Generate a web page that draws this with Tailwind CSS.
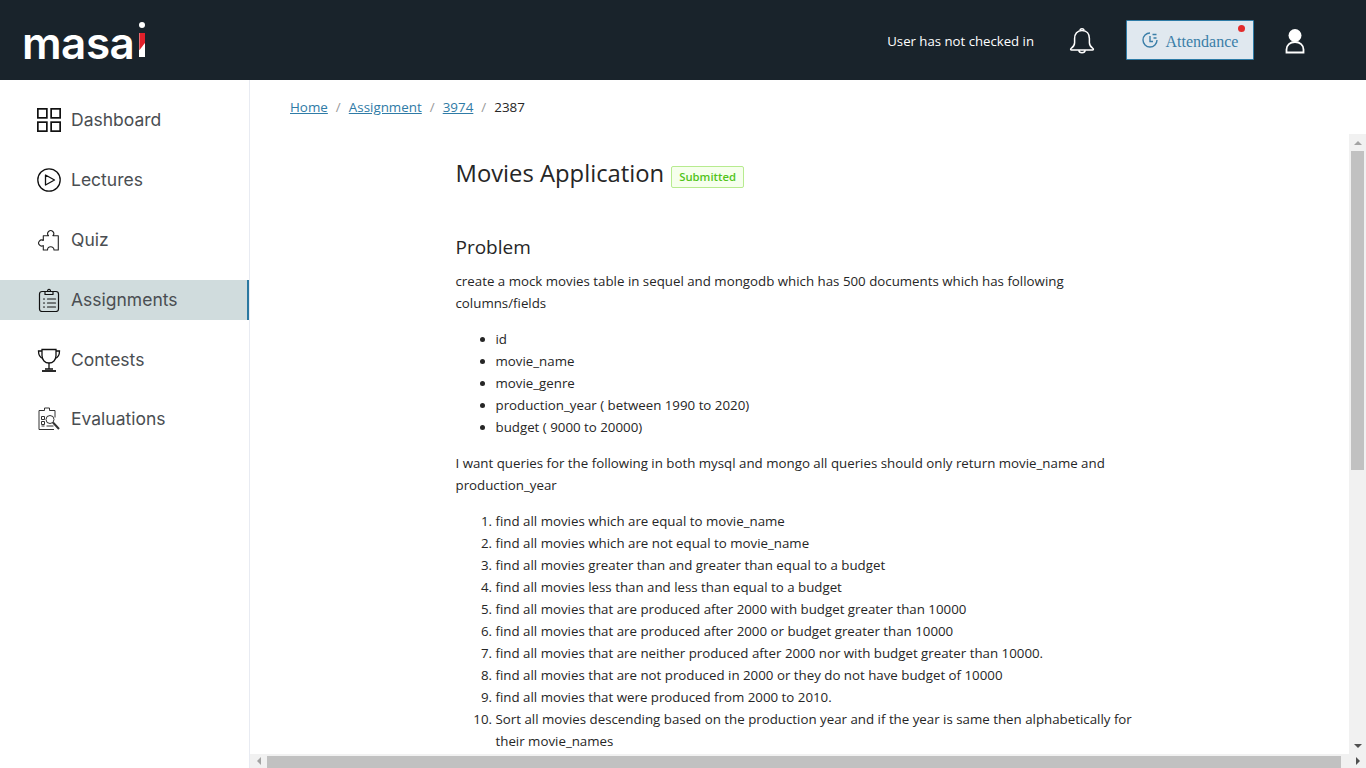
<!DOCTYPE html>
<html lang="en">
<head>
  <meta charset="UTF-8" />
  <title>Movies Application</title>
  <script src="https://cdn.jsdelivr.net/npm/@tailwindcss/browser@4"></script>
</head>
<body class="h-[768px] w-[1366px] overflow-hidden bg-white font-['Open_Sans',sans-serif]">
  <!-- top bar -->
  <header class="flex h-20 items-center bg-[#19232b] pl-[22px] pr-[61px]">
    <div class="flex items-end pt-[6px] text-white">
      <span class="font-['Inter',sans-serif] text-[44px] leading-[44px] font-semibold tracking-[-0.5px]">masa</span>
      <div class="relative mb-[8px] ml-[5px] h-[35px] w-[6px]">
        <div class="absolute top-0 left-0 h-[6px] w-[6px] rounded-full bg-white"></div>
        <div class="absolute bottom-0 left-0 h-[24px] w-[6px] bg-white"></div>
        <div class="absolute bottom-0 left-0 h-[24px] w-[6px] bg-[#e1202a] [clip-path:polygon(0_0,100%_0,100%_40%,0_72%)]"></div>
      </div>
    </div>
    <div class="ml-auto flex items-center">
      <span class="mt-[3px] text-[13.2px] text-white">User has not checked in</span>
      <svg class="mt-[2px] ml-[35px]" width="26" height="28" viewBox="0 0 26 28" fill="none" stroke="white" stroke-width="1.5" stroke-linejoin="round">
        <path d="M13 3.5c-4.8 0-7.4 3.6-7.4 8v4.3c0 2.500-1.400 4.200-3.600 5.700-.7.5-.4 1.500.5 1.500h21c.9 0 1.200-1 .5-1.500-2.200-1.500-3.600-3.200-3.600-5.700v-4.300c0-4.400-2.600-8-7.400-8z"/>
        <path d="M11 3.600c0-2.600 4-2.600 4 0M9.800 23.200c.4 3.400 6 3.400 6.400 0"/>
      </svg>
      <button class="relative ml-[31px] flex h-10 w-[128px] items-center justify-center rounded-[1px] border border-[#2d7ba6] bg-[#e0e8ef] font-['Liberation_Serif',serif] text-[16px] text-[#3a7ea8]">
        <svg class="mr-2" width="16" height="16" viewBox="0 0 16 16" fill="none" stroke="#3a7ea8" stroke-width="1.400">
          <path d="M8 1a7 7 0 1 0 7 7"/>
          <path d="M8 4v5.500h3M10.500 2.500h4M11.500 6h3"/>
        </svg>
        <span class="mt-[4px]">Attendance</span>
        <span class="absolute top-[4px] right-[8px] h-[7px] w-[7px] rounded-full bg-[#e32b2b]"></span>
      </button>
      <svg class="mt-[2px] ml-[31px]" width="20" height="26" viewBox="0 0 20 26" fill="none">
        <circle cx="10" cy="7.500" r="6.500" fill="white"/>
        <path d="M1.500 24.500v-3c0-4.500 3.500-7.500 8.500-7.500s8.500 3 8.500 7.500v3z" stroke="white" stroke-width="1.800"/>
      </svg>
    </div>
  </header>

  <div class="flex h-[688px]">
    <!-- sidebar -->
    <nav class="w-[250px] shrink-0 border-r border-[#e8ebf2] pt-5 font-['Inter',sans-serif] text-[17.5px] text-[#4a4e52]">
      <a class="mb-5 flex h-10 items-center gap-[10px] pl-[37px]">
        <svg width="24" height="24" viewBox="0 0 24 24" fill="none" stroke="#111" stroke-width="1.700">
          <rect x="0.850" y="0.850" width="9" height="9"/><rect x="14.150" y="0.850" width="9" height="9"/>
          <rect x="0.850" y="14.150" width="9" height="9"/><rect x="14.150" y="14.150" width="9" height="9"/>
        </svg>
        <span class="mt-[1px]">Dashboard</span>
      </a>
      <a class="mb-5 flex h-10 items-center gap-[10px] pl-[37px]">
        <svg width="24" height="24" viewBox="0 0 24 24" fill="none" stroke="#111" stroke-width="1.300" stroke-linejoin="round">
          <circle cx="12" cy="12" r="11.200"/><path d="M8.500 7v10l9-5z"/>
        </svg>
        <span class="mt-[1px]">Lectures</span>
      </a>
      <a class="mb-5 flex h-10 items-center gap-[10px] pl-[37px]">
        <svg width="24" height="24" viewBox="0 0 24 24" fill="none" stroke="#222" stroke-width="1.100" stroke-linejoin="round">
          <path d="M6.300 7.700H11.500a3 3 0 1 1 4.400 0H21.300V22H17a3.200 3.200 0 1 0-6.500 0H6.300V17.500a3 3 0 1 1 0-5z"/>
        </svg>
        <span class="mt-[1px]">Quiz</span>
      </a>
      <a class="mb-5 flex h-10 items-center gap-[10px] border-r-2 border-[#2a78a0] bg-[#d0dcdd] pl-[37px]">
        <svg width="24" height="24" viewBox="0 0 24 24" fill="none" stroke="#111" stroke-width="1.200" stroke-linejoin="round" stroke-linecap="round">
          <rect x="2.500" y="3.500" width="19" height="20" rx="2.500"/>
          <path d="M8 3.500h2.500c0-3 3-3 3 0H16v3H8z"/>
          <path d="M6.500 11h1M10.500 11h8M6.500 15h1M10.500 15h8M6.500 19h1M10.500 19h8"/>
        </svg>
        <span class="mt-[1px]">Assignments</span>
      </a>
      <a class="mb-[19px] flex h-10 items-center gap-[10px] pl-[37px]">
        <svg width="24" height="24" viewBox="0 0 24 24" fill="none" stroke="#111" stroke-width="1.300">
          <path d="M5 1.500h14v6c0 4.500-3 7.500-7 7.500s-7-3-7-7.500z"/>
          <path d="M5 3H1.500c0 4.500 1.500 6.500 4.500 7.500M19 3h3.500c0 4.500-1.500 6.500-4.500 7.500"/>
          <path d="M12 15v6M8 21h8" /><path d="M5 23h14" stroke-width="1.800"/>
        </svg>
        <span class="mt-[1px]">Contests</span>
      </a>
      <a class="flex h-10 items-center gap-[10px] pl-[37px]">
        <svg width="24" height="24" viewBox="0 0 24 24" fill="none" stroke="#333" stroke-width="1">
          <path d="M17 22.500H2V3.500h5.500V1h5v2.500H18v7"/>
          <path d="M4.500 9.500h3v3h-3zM4.500 14.500h3v3h-3zM4.500 19h3"/>
          <circle cx="13" cy="12.500" r="4"/>
          <path d="M16 15.500l6 6.500" stroke-width="2"/>
          <path d="M9.500 19h7"/>
        </svg>
        <span class="mt-[1px]">Evaluations</span>
      </a>
    </nav>

    <main class="flex min-w-0 flex-1 flex-col">
      <!-- breadcrumb -->
      <div class="flex h-[54px] shrink-0 items-center pt-[1px] pl-10 text-[13.4px] text-[#262626]">
        <a class="text-[#2f7ba6] underline">Home</a><span class="mx-2 text-[#999]">/</span>
        <a class="text-[#2f7ba6] underline">Assignment</a><span class="mx-2 text-[#999]">/</span>
        <a class="text-[#2f7ba6] underline">3974</a><span class="mx-2 text-[#999]">/</span>
        <span>2387</span>
      </div>

      <div class="flex min-h-0 flex-1">
        <!-- assignment body -->
        <article class="min-w-0 flex-1 overflow-hidden pt-[23px] pl-[205.5px] text-[13.3px] leading-[22px] text-[#262626]">
          <div class="w-[690px]">
            <div class="flex items-center">
              <h1 class="text-[23.8px] leading-[32px] font-normal">Movies Application</h1>
              <span class="mt-[7px] ml-[7px] rounded-[2px] border border-[#b7eb8f] bg-[#f6ffed] px-[7px] text-[11.300px] leading-[20px] font-semibold text-[#52c41a]">Submitted</span>
            </div>
            <h2 class="mt-[44px] text-[19px] leading-[28px] font-normal">Problem</h2>
            <p class="mt-[9px] mb-[14px]">create a mock movies table in sequel and mongodb which has 500 documents which has following<br>columns/fields</p>
            <ul class="mb-[14px] list-disc pl-10">
              <li>id</li>
              <li>movie_name</li>
              <li>movie_genre</li>
              <li>production_year ( between 1990 to 2020)</li>
              <li>budget ( 9000 to 20000)</li>
            </ul>
            <p class="mb-[14px]">I want queries for the following in both mysql and mongo all queries should only return movie_name and<br>production_year</p>
            <ol class="list-decimal pl-10">
              <li>find all movies which are equal to movie_name</li>
              <li>find all movies which are not equal to movie_name</li>
              <li>find all movies greater than and greater than equal to a budget</li>
              <li>find all movies less than and less than equal to a budget</li>
              <li>find all movies that are produced after 2000 with budget greater than 10000</li>
              <li>find all movies that are produced after 2000 or budget greater than 10000</li>
              <li>find all movies that are neither produced after 2000 nor with budget greater than 10000.</li>
              <li>find all movies that are not produced in 2000 or they do not have budget of 10000</li>
              <li>find all movies that were produced from 2000 to 2010.</li>
              <li>Sort all movies descending based on the production year and if the year is same then alphabetically for<br>their movie_names</li>
            </ol>
          </div>
        </article>

        <!-- vertical scrollbar -->
        <div class="flex w-[17px] shrink-0 flex-col items-center bg-[#f1f1f1]">
          <div class="flex h-[17px] w-full shrink-0 items-center justify-center">
            <div class="h-0 w-0 border-x-[4px] border-b-[4px] border-x-transparent border-b-[#a3a3a3]"></div>
          </div>
          <div class="h-[319px] w-[13px] shrink-0 bg-[#c1c1c1]"></div>
          <div class="flex-1"></div>
          <div class="flex h-[17px] w-full shrink-0 items-center justify-center">
            <div class="h-0 w-0 border-x-[4px] border-t-[4px] border-x-transparent border-t-[#505050]"></div>
          </div>
        </div>
      </div>

      <!-- horizontal scrollbar -->
      <div class="flex h-[14px] shrink-0 items-end bg-[#f1f1f1]">
        <div class="flex h-full w-[17px] shrink-0 items-center justify-center">
          <div class="h-0 w-0 border-y-[4px] border-r-[4px] border-y-transparent border-r-[#a3a3a3]"></div>
        </div>
        <div class="h-[12px] w-[1074px] bg-[#c1c1c1]"></div>
        <div class="flex-1"></div>
        <div class="flex h-full w-[17px] shrink-0 items-center justify-center">
          <div class="h-0 w-0 border-y-[4px] border-l-[4px] border-y-transparent border-l-[#505050]"></div>
        </div>
      </div>
    </main>
  </div>
</body>
</html>
